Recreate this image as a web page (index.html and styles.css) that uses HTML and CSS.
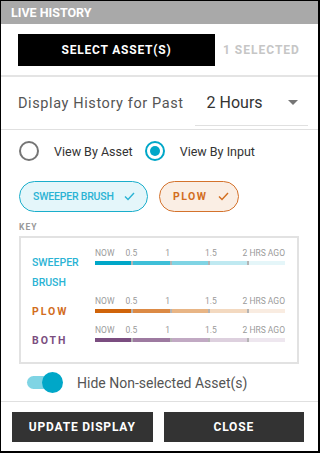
FILE: index.html
```html
<!DOCTYPE html>
<html lang="en">

<head>
    <meta charset="UTF-8">
    <meta name="viewport" content="width=device-width, initial-scale=1.0">
    <title>Live History</title>
    <link rel="stylesheet" href="styles.css">
</head>

<body>
    <div class="panel">
        <div class="panel-header">LIVE HISTORY</div>

        <div class="select-row">
            <button class="btn-select">SELECT ASSET(S)</button>
            <span class="selected-count">1 SELECTED</span>
        </div>

        <div class="history-row">
            <span class="history-label">Display History for Past</span>
            <div class="history-select">
                <span>2 Hours</span>
                <svg width="10" height="5" viewBox="0 0 10 5"><path d="M0 0h10L5 5z" fill="#757575"/></svg>
            </div>
        </div>

        <div class="body">
            <div class="radio-row">
                <label class="radio"><span class="radio-ring"></span>View By Asset</label>
                <label class="radio checked"><span class="radio-ring"></span>View By Input</label>
            </div>

            <div class="chips">
                <span class="chip chip-sweeper">SWEEPER BRUSH
                    <svg width="11" height="9" viewBox="0 0 11 9"><path d="M1 4.5l3 3L10 1" fill="none" stroke="currentColor" stroke-width="1.4"/></svg>
                </span>
                <span class="chip chip-plow">PLOW
                    <svg width="11" height="9" viewBox="0 0 11 9"><path d="M1 4.5l3 3L10 1" fill="none" stroke="currentColor" stroke-width="1.4"/></svg>
                </span>
            </div>

            <div class="key-title">KEY</div>
            <div class="key">
                <div class="key-row row-sweeper">
                    <div class="key-name">SWEEPER<br>BRUSH</div>
                    <div class="scale">
                        <div class="ticks"><span>NOW</span><span class="t1">0.5</span><span class="t2">1</span><span class="t3">1.5</span><span class="t4">2 HRS AGO</span></div>
                        <div class="bar"><i></i><i></i><i></i><i></i><i></i></div>
                    </div>
                </div>
                <div class="key-row row-plow">
                    <div class="key-name">PLOW</div>
                    <div class="scale">
                        <div class="ticks"><span>NOW</span><span class="t1">0.5</span><span class="t2">1</span><span class="t3">1.5</span><span class="t4">2 HRS AGO</span></div>
                        <div class="bar"><i></i><i></i><i></i><i></i><i></i></div>
                    </div>
                </div>
                <div class="key-row row-both">
                    <div class="key-name">BOTH</div>
                    <div class="scale">
                        <div class="ticks"><span>NOW</span><span class="t1">0.5</span><span class="t2">1</span><span class="t3">1.5</span><span class="t4">2 HRS AGO</span></div>
                        <div class="bar"><i></i><i></i><i></i><i></i><i></i></div>
                    </div>
                </div>
            </div>

            <div class="toggle-row">
                <span class="toggle"><span class="knob"></span></span>
                <span class="toggle-label">Hide Non-selected Asset(s)</span>
            </div>
        </div>

        <div class="footer">
            <button class="btn-dark">UPDATE DISPLAY</button>
            <button class="btn-dark">CLOSE</button>
        </div>
    </div>
</body>

</html>
```

FILE: styles.css
```css
* {
    box-sizing: border-box;
}

body {
    margin: 0;
    font-family: Roboto, Arial, sans-serif;
    background: #fff;
}

.panel {
    width: 320px;
    height: 453px;
    border: 1px solid #000;
    border-right-width: 2px;
    border-bottom-width: 2px;
    display: flex;
    flex-direction: column;
    overflow: hidden;
}

.panel-header {
    background: #a9a9a9;
    color: #fff;
    font-weight: 700;
    font-size: 12.5px;
    height: 23px;
    line-height: 23px;
    padding-left: 10px;
}

.select-row {
    display: flex;
    align-items: center;
    padding: 10px 0 9px 17px;
    border-bottom: 2px solid #e4e4e4;
}

.btn-select {
    width: 197px;
    height: 32px;
    background: #000;
    color: #fff;
    border: none;
    font-family: Roboto, Arial, sans-serif;
    font-weight: 700;
    font-size: 12px;
    letter-spacing: 0.8px;
}

.selected-count {
    margin-left: 8px;
    color: #c6c6c6;
    font-weight: 700;
    font-size: 12px;
    letter-spacing: 1px;
}

.history-row {
    display: flex;
    align-items: center;
    padding: 0 10px 0 17px;
    height: 53px;
    border-bottom: 1px solid #e0e0e0;
}

.history-label {
    color: #555;
    font-size: 14.5px;
    letter-spacing: 0.6px;
}

.history-select {
    margin-left: 11px;
    flex: 1;
    height: 46px;
    display: flex;
    align-items: center;
    justify-content: space-between;
    padding: 0 10px 0 12px;
    border-bottom: 1px solid #e0e0e0;
    color: #333;
    font-size: 16px;
}

.body {
    flex: 1;
    padding: 0 20px 0 18px;
    border-bottom: 1px solid #e0e0e0;
}

.radio-row {
    display: flex;
    align-items: center;
    height: 42px;
    font-size: 12.5px;
    color: #333;
}

.radio {
    display: flex;
    align-items: center;
    margin-right: 12px;
}

.radio-ring {
    width: 20px;
    height: 20px;
    border: 2px solid #757575;
    border-radius: 50%;
    margin-right: 15px;
    display: flex;
    align-items: center;
    justify-content: center;
}

.radio.checked .radio-ring {
    border-color: #00a7c8;
}

.radio.checked .radio-ring::after {
    content: "";
    width: 10px;
    height: 10px;
    border-radius: 50%;
    background: #00a7c8;
}

.chips {
    display: flex;
    gap: 11px;
    padding-top: 9px;
}

.chip {
    display: flex;
    align-items: center;
    justify-content: space-between;
    height: 31px;
    border-radius: 16px;
    border: 1px solid;
    font-size: 10.5px;
    font-weight: 500;
    white-space: nowrap;
    padding: 0 12px 0 13px;
}

.chip svg {
    flex-shrink: 0;
    margin-left: 10px;
}

.chip-sweeper {
    width: 129px;
    background: #e4f6fa;
    border-color: #1aaecb;
    color: #2ab3d4;
    letter-spacing: -0.2px;
}

.chip-plow {
    width: 80px;
    background: #faeee4;
    border-color: #d4722c;
    color: #d26d1e;
    font-weight: 700;
    letter-spacing: 1.5px;
}

.key-title {
    margin-top: 10px;
    font-size: 8.5px;
    font-weight: 700;
    color: #999;
    letter-spacing: 1px;
    line-height: 11px;
}

.key {
    margin-top: 3px;
    width: 280px;
    height: 128px;
    border: 2px solid #e2e2e2;
    padding: 10px 0 0 11px;
}

.key-row {
    display: flex;
    align-items: flex-start;
}

.row-sweeper {
    height: 48px;
}

.row-plow {
    height: 29px;
}

.key-name {
    width: 63px;
    font-size: 10.5px;
    font-weight: 500;
    line-height: 20px;
    padding-top: 5px;
}

.row-sweeper .key-name {
    color: #2ab3d4;
}

.row-plow .key-name,
.row-both .key-name {
    font-weight: 700;
    letter-spacing: 2px;
    line-height: 11px;
    padding-top: 10px;
}

.row-plow .key-name {
    color: #d26d1e;
}

.row-both .key-name {
    color: #7b4e80;
}

.scale {
    width: 190px;
}

.ticks {
    display: flex;
    font-size: 8.5px;
    color: #9a9a9a;
    line-height: 11px;
    height: 13px;
}

.ticks .t1 {
    margin-left: 11px;
}

.ticks .t2 {
    margin-left: 28px;
}

.ticks .t3 {
    margin-left: 35px;
}

.ticks .t4 {
    margin-left: auto;
}

.bar {
    display: flex;
    height: 4px;
}

.bar i {
    flex: 1;
    border-left: 2px solid #b4b4b4;
}

.bar i:first-child {
    border-left: none;
}

.row-sweeper .bar i:nth-child(1) { background: #00a7c8; }
.row-sweeper .bar i:nth-child(2) { background: #3ebfd8; }
.row-sweeper .bar i:nth-child(3) { background: #7fd4e4; }
.row-sweeper .bar i:nth-child(4) { background: #bfe9f1; }
.row-sweeper .bar i:nth-child(5) { background: #e5f6f9; }

.row-plow .bar i:nth-child(1) { background: #d0640a; }
.row-plow .bar i:nth-child(2) { background: #dc8a45; }
.row-plow .bar i:nth-child(3) { background: #e8b585; }
.row-plow .bar i:nth-child(4) { background: #f3d9c0; }
.row-plow .bar i:nth-child(5) { background: #f9ece1; }

.row-both .bar i:nth-child(1) { background: #7b4e80; }
.row-both .bar i:nth-child(2) { background: #9d7aa0; }
.row-both .bar i:nth-child(3) { background: #c1a9c3; }
.row-both .bar i:nth-child(4) { background: #ddd0de; }
.row-both .bar i:nth-child(5) { background: #eee7ef; }

.toggle-row {
    display: flex;
    align-items: center;
    height: 37px;
    padding-left: 8px;
}

.toggle {
    position: relative;
    width: 34px;
    height: 13px;
    border-radius: 7px;
    background: #7fd4e4;
    margin-right: 16px;
}

.toggle .knob {
    position: absolute;
    right: -2px;
    top: -4px;
    width: 21px;
    height: 21px;
    border-radius: 50%;
    background: #00a7c8;
}

.toggle-label {
    font-size: 14px;
    color: #555;
}

.footer {
    display: flex;
    gap: 11px;
    padding: 10px 14px 9px 11px;
}

.btn-dark {
    flex: 1;
    height: 30px;
    background: #333;
    color: #fff;
    border: none;
    font-family: Roboto, Arial, sans-serif;
    font-weight: 700;
    font-size: 12px;
    letter-spacing: 0.8px;
}
```
